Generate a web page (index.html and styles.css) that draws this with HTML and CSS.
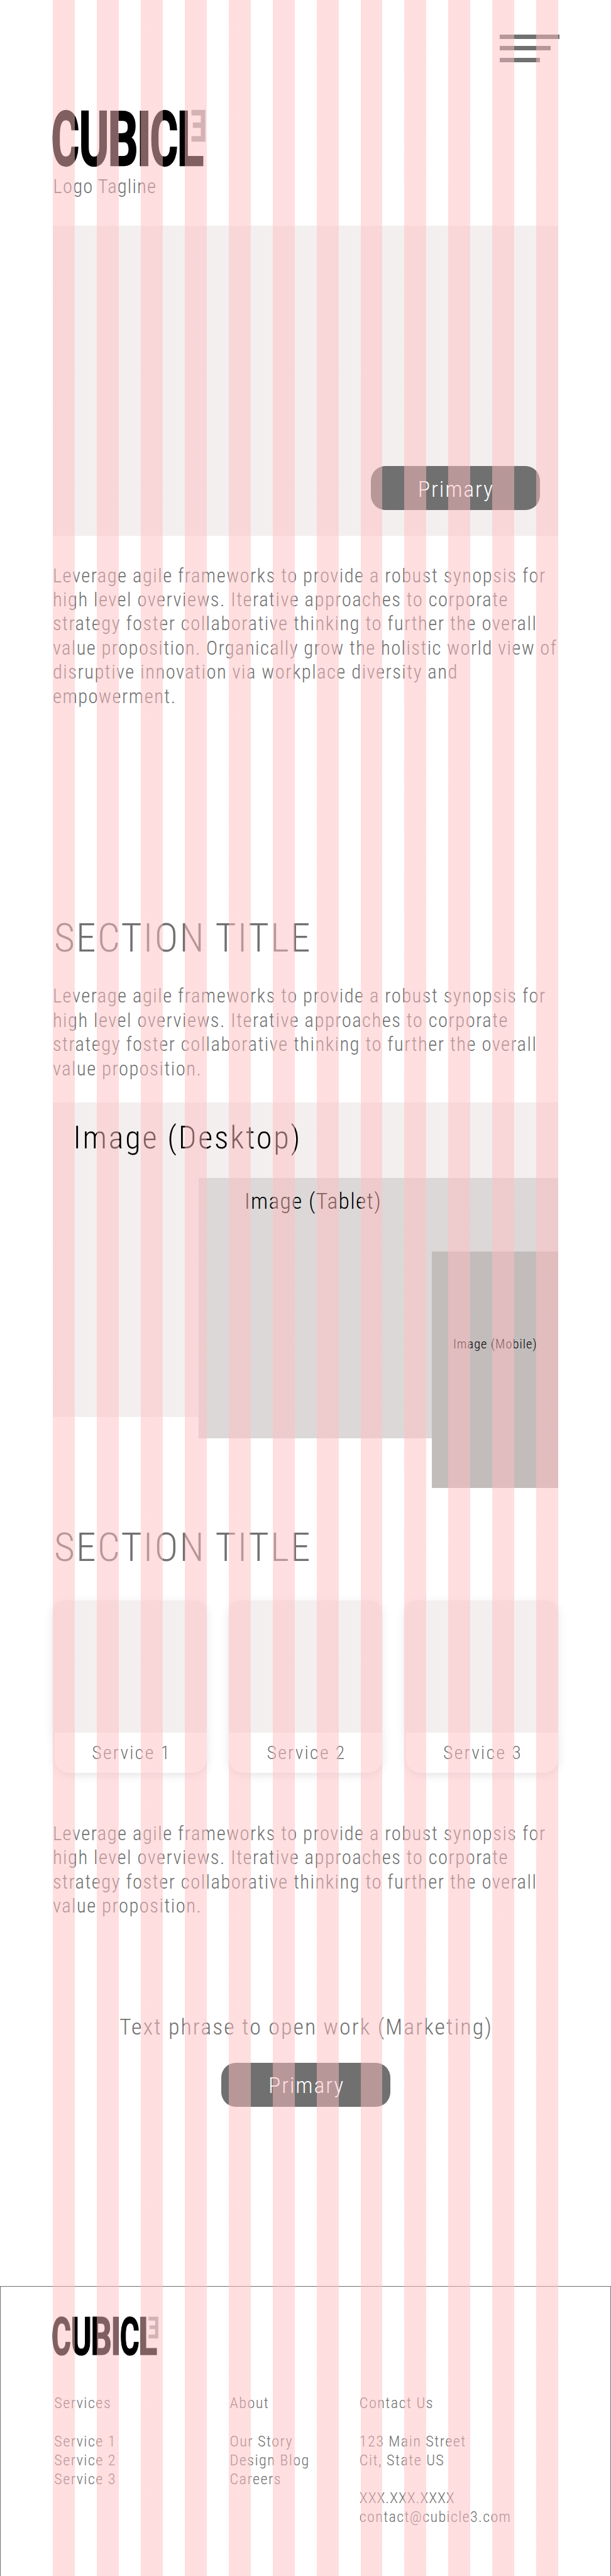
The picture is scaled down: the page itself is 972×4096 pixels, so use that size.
FILE: index.html
```
<!DOCTYPE html>
<html lang="en">
<head>
<meta charset="utf-8">
<title>Cubicle3</title>
<link rel="stylesheet" href="styles.css">
</head>
<body>
<svg class="defs" aria-hidden="true">
  <symbol id="wordmark" viewBox="142 299 420 158">
    <g class="mark-letters">
      <text transform="translate(139.4 450.9) scale(1.174 2.082)">C</text>
      <text transform="translate(215.4 450.9) scale(1.241 2.082)">U</text>
      <text transform="translate(294 450.9) scale(1.295 2.082)">B</text>
      <text transform="translate(372.7 450.9) scale(1.382 2.082)">I</text>
      <text transform="translate(408.7 450.9) scale(1.174 2.082)">C</text>
      <text transform="translate(482.5 450.9) scale(1.357 2.082)">L</text>
      <text class="mark-three" transform="translate(564.3 386.6) scale(-.776 1.2)">E</text>
    </g>
  </symbol>
</svg>
<div class="page">
  <header class="header">
    <div class="menu"><span class="bar bar-long"></span><span class="bar bar-mid"></span><span class="bar bar-short"></span></div>
    <svg class="logo"><use href="#wordmark"/></svg>
    <div class="tagline">Logo Tagline</div>
  </header>

  <main class="content">
    <section class="hero"><a class="button">Primary</a></section>
    <p class="copy intro">Leverage agile frameworks to provide a robust synopsis for<br>high level overviews. Iterative approaches to corporate<br>strategy foster collaborative thinking to further the overall<br><span class="tight">value proposition. Organically grow the holistic world view of</span><br>disruptive innovation via workplace diversity and<br>empowerment.</p>

    <h2 class="title title-work">SECTION TITLE</h2>
    <p class="copy work-copy">Leverage agile frameworks to provide a robust synopsis for<br>high level overviews. Iterative approaches to corporate<br>strategy foster collaborative thinking to further the overall<br>value proposition.</p>
    <div class="stack">
      <div class="shot desktop">Image (Desktop)</div>
      <div class="shot tablet">Image (Tablet)</div>
      <div class="shot mobile">Image (Mobile)</div>
    </div>

    <h2 class="title title-services">SECTION TITLE</h2>
    <div class="cards">
      <div class="card card-a"><div class="card-image"></div><div class="card-label">Service 1</div></div>
      <div class="card card-b"><div class="card-image"></div><div class="card-label">Service 2</div></div>
      <div class="card card-c"><div class="card-image"></div><div class="card-label">Service 3</div></div>
    </div>
    <p class="copy services-copy">Leverage agile frameworks to provide a robust synopsis for<br>high level overviews. Iterative approaches to corporate<br>strategy foster collaborative thinking to further the overall<br>value proposition.</p>

    <div class="cta">
      <div class="phrase">Text phrase to open work (Marketing)</div>
      <a class="button">Primary</a>
    </div>
  </main>

  <footer class="footer">
    <svg class="logo logo-small"><use href="#wordmark"/></svg>
    <div class="links">
      <div class="col"><div class="head">Services</div><div>Service 1</div><div>Service 2</div><div>Service 3</div></div>
      <div class="col"><div class="head">About</div><div>Our Story</div><div>Design Blog</div><div>Careers</div></div>
      <div class="col"><div class="head">Contact Us</div><div>123 Main Street</div><div class="gap">Cit, State US</div><div class="phone">XXX.XXX.XXXX</div><div class="mail">contact@cubicle3.com</div></div>
    </div>
  </footer>
  <div class="columns"></div>
</div>
</body>
</html>
```
FILE: styles.css
```
* { box-sizing: border-box; }

body {
  margin: 0;
  background: #fff;
  color: #707070;
  font-family: "Roboto Condensed", Roboto, "Open Sans", sans-serif;
  font-stretch: 75%;
  font-weight: 300;
}

.defs { display: block; width: 0; height: 0; }

.page {
  position: relative;
  display: flex;
  flex-direction: column;
  width: 972px;
  height: 4096px;
  overflow: hidden;
}

/* Twelve-column layout guide laid over the whole page */
.columns {
  position: absolute;
  top: 0;
  bottom: 0;
  left: 83.9px;
  width: 804.2px;
  background: repeating-linear-gradient(90deg, rgba(255, 190, 193, .5) 0 34.965px, transparent 34.965px 69.93px);
  pointer-events: none;
}

/* Header */
.header {
  display: flex;
  flex-direction: column;
  padding: 54.7px 0 0 82.8px;
}

.menu {
  display: flex;
  flex-direction: column;
  gap: 11.7px;
  width: 95.6px;
  margin-left: 711.9px;
}

.bar { height: 7px; background: #707070; }
.bar-long { width: 95.6px; }
.bar-mid { width: 81.6px; }
.bar-short { width: 64.1px; }

.logo {
  display: block;
  width: 244.8px;
  height: 92.1px;
  margin-top: 75.2px;
  overflow: visible;
}

.mark-letters {
  font-family: Roboto, sans-serif;
  font-size: 100px;
  font-weight: 700;
  font-stretch: 100%;
  fill: #000;
  stroke: #000;
  stroke-width: 2;
}

.mark-three { fill: #a7a7a7; stroke: #a7a7a7; stroke-width: 1; }

.tagline {
  margin: 11.8px 0 0 1.8px;
  font-size: 30.6px;
  line-height: 38px;
  letter-spacing: 1.16px;
}

/* Main column */
.content {
  width: 804.2px;
  margin: 42.8px 0 0 83.9px;
}

.hero {
  display: flex;
  justify-content: flex-end;
  align-items: flex-end;
  height: 493px;
  padding: 0 29.1px 40.9px 0;
  background: #f3efee;
}

.button {
  display: flex;
  justify-content: center;
  align-items: center;
  width: 269.2px;
  height: 69.8px;
  padding: 3.6px 0 0 2px;
  border-radius: 23.3px;
  background: #707070;
  color: #fff;
  font-size: 35.8px;
  line-height: 42px;
  letter-spacing: 1.87px;
}

.copy {
  margin: 0;
  padding-top: .6px;
  font-size: 30.6px;
  line-height: 38.46px;
  letter-spacing: 1.49px;
  white-space: nowrap;
}

.tight { letter-spacing: 1.4px; }

.intro { margin-top: 44px; }
.work-copy { margin-top: 34.6px; }
.services-copy { margin-top: 77.6px; }

.title {
  margin: 0;
  padding-left: 2px;
  font-size: 63.5px;
  font-weight: 300;
  line-height: 76px;
  letter-spacing: 2.35px;
}

.title-work { margin-top: 326.9px; }
.title-services { margin-top: 57.3px; }

/* Overlapping device previews share one grid cell */
.stack {
  display: grid;
  height: 612.7px;
  margin-top: 33.8px;
  color: #000;
}

.shot { grid-area: 1 / 1; justify-self: end; }

.desktop {
  width: 804.2px;
  height: 499.9px;
  padding: 26.2px 0 0 32.6px;
  background: #f3efee;
  font-size: 50.4px;
  line-height: 60px;
  letter-spacing: 2.74px;
}

.tablet {
  width: 572.4px;
  height: 413.8px;
  margin-top: 120.1px;
  padding: 14.5px 0 0 73.3px;
  background: #dcd8d7;
  font-size: 35.6px;
  line-height: 44px;
  letter-spacing: 1.3px;
}

.mobile {
  width: 201.5px;
  height: 375.3px;
  margin-top: 237.4px;
  padding: 133.6px 0 0 34.3px;
  background: #c2bcbb;
  font-size: 20.5px;
  line-height: 26px;
  letter-spacing: .99px;
}

/* Service cards */
.cards {
  display: grid;
  grid-template-columns: repeat(3, 244.8px);
  justify-content: space-between;
  margin-top: 46.5px;
}

.card { filter: drop-shadow(0 4px 7px rgba(30, 30, 60, .12)); }

.card-image {
  width: 243.2px;
  height: 209.7px;
  margin-left: .6px;
  border-radius: 17.5px 17.5px 0 0;
  background: #f3efee;
}

.card-label {
  height: 63.7px;
  margin-left: .6px;
  padding-left: 2.5px;
  border-radius: 0 0 23.3px 23.3px;
  background: #fff;
  font-size: 30px;
  line-height: 63.7px;
  letter-spacing: 2.2px;
  text-align: center;
}

.card-a .card-label { margin-left: 3.5px; }
.card-c .card-label { margin-left: 2.3px; }

/* Call to action */
.cta {
  display: flex;
  flex-direction: column;
  align-items: center;
  gap: 34.6px;
  margin-top: 150.4px;
  padding-left: 1.2px;
}

.phrase {
  padding-left: 1px;
  font-size: 35.8px;
  line-height: 44px;
  letter-spacing: 2.15px;
  white-space: nowrap;
}

/* Footer */
.footer {
  flex: 1;
  margin-top: 285.8px;
  border: solid #707070;
  border-width: 1px 1px 0;
  padding: 46.2px 0 0 81.8px;
}

.logo-small { width: 169.6px; height: 63.9px; margin-top: 0; }

.links {
  display: grid;
  grid-template-columns: 279.3px 206.3px 1fr;
  margin: 60px 0 0 3.4px;
  font-size: 24.2px;
  line-height: 30.16px;
  letter-spacing: 1.45px;
}

.head, .gap { margin-bottom: 30.16px; }
.phone { letter-spacing: .89px; }
.mail { letter-spacing: 1.31px; }
```
